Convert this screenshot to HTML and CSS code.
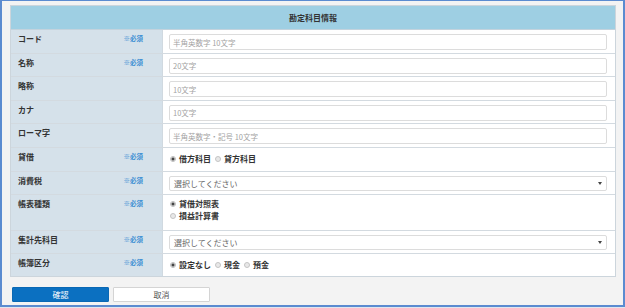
FILE: index.html
```html
<!DOCTYPE html>
<html lang="ja">
<head>
<meta charset="utf-8">
<title>勘定科目情報</title>
<link rel="stylesheet" href="styles.css">
</head>
<body>
<div class="frame">
  <div class="form">
    <div class="head">勘定科目情報</div>
    <div class="row">
      <div class="lab"><span>コード</span><span class="req">※必須</span></div>
      <div class="val"><input class="inp" placeholder="半角英数字 10文字"></div>
    </div>
    <div class="row">
      <div class="lab"><span>名称</span><span class="req">※必須</span></div>
      <div class="val"><input class="inp" placeholder="20文字"></div>
    </div>
    <div class="row">
      <div class="lab"><span>略称</span></div>
      <div class="val"><input class="inp" placeholder="10文字"></div>
    </div>
    <div class="row">
      <div class="lab"><span>カナ</span></div>
      <div class="val"><input class="inp" placeholder="10文字"></div>
    </div>
    <div class="row">
      <div class="lab"><span>ローマ字</span></div>
      <div class="val"><input class="inp" placeholder="半角英数字・記号 10文字"></div>
    </div>
    <div class="row">
      <div class="lab"><span>貸借</span><span class="req">※必須</span></div>
      <div class="val radios">
        <span class="opt"><span class="rb on"></span>借方科目</span>
        <span class="opt"><span class="rb"></span>貸方科目</span>
      </div>
    </div>
    <div class="row">
      <div class="lab"><span>消費税</span><span class="req">※必須</span></div>
      <div class="val"><div class="sel">選択してください<span class="arrow"></span></div></div>
    </div>
    <div class="row double">
      <div class="lab"><span>帳表種類</span><span class="req">※必須</span></div>
      <div class="val stack">
        <span class="opt"><span class="rb on"></span>貸借対照表</span>
        <span class="opt"><span class="rb"></span>損益計算書</span>
      </div>
    </div>
    <div class="row">
      <div class="lab"><span>集計先科目</span><span class="req">※必須</span></div>
      <div class="val"><div class="sel">選択してください<span class="arrow"></span></div></div>
    </div>
    <div class="row last">
      <div class="lab"><span>帳簿区分</span><span class="req">※必須</span></div>
      <div class="val radios">
        <span class="opt"><span class="rb on"></span>設定なし</span>
        <span class="opt"><span class="rb"></span>現金</span>
        <span class="opt"><span class="rb"></span>預金</span>
      </div>
    </div>
  </div>
  <div class="btns">
    <button class="btn ok">確認</button>
    <button class="btn cancel">取消</button>
  </div>
</div>
</body>
</html>
```
FILE: styles.css
```css
* { box-sizing: border-box; }
html, body { margin: 0; padding: 0; background: #dfe6ee; }
body {
  font-family: "Noto Sans CJK JP", "Noto Sans", sans-serif;
  color: #333;
}
.frame {
  width: 625px;
  height: 307px;
  border-style: solid;
  border-color: #5b8bd0;
  border-width: 1px 2px 2px 2px;
  background: #f3f3f3;
  padding: 4px 7px 0 8px;
}
.form {
  border: 1px solid #ccd5dc;
  border-bottom: 0;
  background: #fff;
}
.head {
  height: 24px;
  background: #9ecfe3;
  border-bottom: 1px solid #c3d3dd;
  display: flex;
  align-items: center;
  justify-content: center;
  font-size: 8px;
  font-weight: bold;
  color: #333;
}
.row {
  display: flex;
  height: 23.6px;
  border-bottom: 1px solid #d3dae0;
}
.row.double { height: 35.6px; }
.row.last { height: 22.8px; border-bottom: 1px solid #ccd5dc; }
.lab {
  width: 152px;
  flex: none;
  background: #d5e1ea;
  border-right: 1px solid #d0d9e0;
  display: flex;
  justify-content: space-between;
  align-items: flex-start;
  padding: 4px 19px 0 7px;
  font-size: 8px;
  line-height: 10px;
  font-weight: bold;
  color: #333;
}
.req {
  font-size: 6.5px;
  color: #3b8ed3;
  font-weight: bold;
  margin-top: -1px;
}
.val {
  flex: 1;
  padding: 4px 8px 0 6px;
}
.inp {
  display: block;
  width: 100%;
  height: 16px;
  border: 1px solid #dcdcdc;
  border-radius: 2px;
  background: #fff;
  padding: 0 0 0 3px;
  margin: 0;
  font-family: inherit;
  font-size: 7.5px;
  color: #333;
  outline: none;
}
.inp::placeholder { color: #a2a2a2; }
.sel {
  position: relative;
  height: 15px;
  border: 1px solid #dcdcdc;
  border-radius: 2px;
  background: #fff;
  padding-left: 4px;
  font-size: 8px;
  line-height: 13px;
  color: #666;
}
.arrow {
  position: absolute;
  right: 4px;
  top: 5px;
  width: 0;
  height: 0;
  border-left: 2px solid transparent;
  border-right: 2px solid transparent;
  border-top: 3px solid #444;
}
.radios {
  display: flex;
  align-items: center;
  gap: 4px;
  padding-top: 0;
  padding-left: 7px;
}
.stack {
  display: flex;
  flex-direction: column;
  padding-top: 3px;
  padding-left: 7px;
}
.opt {
  display: inline-flex;
  align-items: center;
  font-size: 8px;
  line-height: 12px;
  font-weight: bold;
  color: #333;
}
.rb {
  width: 6px;
  height: 6px;
  border-radius: 50%;
  border: 1px solid #c4c4c4;
  background: #e8e8e8;
  margin-right: 3px;
  flex: none;
}
.rb.on {
  background: radial-gradient(circle, #444 0 1.3px, #e8e8e8 1.8px);
  border-color: #bdbdbd;
}
.btns {
  display: flex;
  gap: 4px;
  margin-top: 10px;
  padding-left: 2px;
}
.btn {
  width: 97px;
  height: 15px;
  margin: 0;
  padding: 0;
  font-family: inherit;
  font-size: 8px;
  border-radius: 1px;
}
.ok {
  background: #0b70c1;
  border: 1px solid #0a68b4;
  color: #fff;
}
.cancel {
  background: #fff;
  border: 1px solid #d4d4d4;
  color: #555;
}
```
